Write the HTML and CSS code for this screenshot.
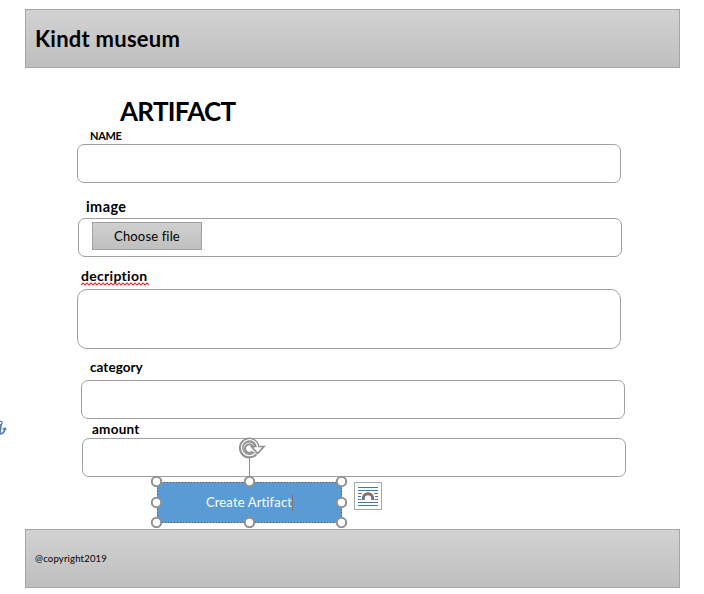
FILE: index.html
```html
<!DOCTYPE html>
<html lang="en">
<head>
<meta charset="utf-8">
<title>Kindt museum</title>
<link rel="stylesheet" href="styles.css">
</head>
<body>
<header class="bar"><span class="brand">Kindt museum</span></header>
<main class="form">
  <h1 class="title"><span>ARTIFACT</span></h1>
  <section class="field name"><label>NAME</label><div class="box"></div></section>
  <section class="field image"><label>image</label><div class="box"><button class="choose"><span>Choose file</span></button></div></section>
  <section class="field description"><label>decription<svg class="squiggle" width="68" height="4" viewBox="0 0 68 4"><path d="M0 3 l2-2 2 2 2-2 2 2 2-2 2 2 2-2 2 2 2-2 2 2 2-2 2 2 2-2 2 2 2-2 2 2 2-2 2 2 2-2 2 2 2-2 2 2 2-2 2 2 2-2 2 2 2-2 2 2 2-2 2 2 2-2 2 2 2-2 2 2 2-2 2 2" fill="none" stroke="#e2333a" stroke-width="1.1"/></svg></label><div class="box"></div></section>
  <section class="field category"><label>category</label><div class="box"></div></section>
  <section class="field amount"><label>amount</label><div class="box"></div></section>
  <div class="actions">
    <button class="create"><span>Create Artifact</span><i class="caret"></i></button>
    <svg class="selection" width="204" height="96" viewBox="0 0 204 96">
      <path d="M102.500 25V45" stroke="#919191" fill="none"/>
      <rect x="10.500" y="50.500" width="184" height="40" fill="none" stroke="#b9cfe4"/>
      <rect x="10.500" y="50.500" width="184" height="40" fill="none" stroke="#4c5968" stroke-dasharray="2 1"/>
      <g fill="#fff" stroke="#919191" stroke-width="2">
        <circle cx="9.500" cy="49.500" r="4.700"/><circle cx="102.500" cy="49.500" r="4.700"/><circle cx="194.500" cy="49.500" r="4.700"/>
        <circle cx="9.500" cy="70.500" r="4.700"/><circle cx="194.500" cy="70.500" r="4.700"/>
        <circle cx="9.500" cy="90.500" r="4.700"/><circle cx="102.500" cy="90.500" r="4.700"/><circle cx="194.500" cy="90.500" r="4.700"/>
      </g>
      <path d="M108.300 21.300A8 8 0 1 1 110 14" fill="none" stroke="#919191" stroke-width="4.800"/>
      <path d="M104.500 14.500H117L110.500 21.500Z" fill="#fff" stroke="#919191" stroke-width="1.700"/>
      <path d="M108 21.500A8 8 0 1 1 110.500 15.500" fill="none" stroke="#fff" stroke-width="1.200"/>
      <path d="M106.500 15.500A4.300 4.300 0 1 0 105.500 19.500" fill="none" stroke="#919191" stroke-width="2"/>
    </svg>
    <svg class="layout" width="28" height="28" viewBox="0 0 28 28">
      <rect x=".5" y=".5" width="27" height="27" fill="#fff" stroke="#a6a6a6"/>
      <path d="M4 5.500H24M4 8.500H24M4 11.500H8M20 11.500H24M4 14.500H7M21 14.500H24M4 17.500H7M21 17.500H24M4 20.500H24M4 23.500H24" stroke="#4779a8" fill="none"/>
      <path d="M9.300 18V16.500A4.700 4.700 0 0 1 18.700 16.500V18" stroke="#737373" stroke-width="3" fill="none"/>
    </svg>
  </div>
</main>
<footer class="bar"><span class="copy">@copyright2019</span></footer>
<svg class="anchor" width="8" height="18" viewBox="0 0 8 18"><g fill="none" stroke="#5b80a8"><circle cx="0.500" cy="3" r="1.700" stroke-width="1.300"/><path d="M.8 5L-.5 13.500" stroke-width="2.400"/><path d="M-2 13.500Q4 15 5 8.500" stroke-width="1.800"/><path d="M2.500 9.500L5 8L6.300 10" stroke-width="1.300"/></g></svg>
</body>
</html>
```
FILE: styles.css
```css
* { box-sizing: border-box; }
body {
  margin: 0;
  padding: 9px 24px 6px 25px;
  height: 594px;
  background: #fff;
  color: #000;
  font-family: Lato, "Open Sans", sans-serif;
  font-variant-ligatures: none;
  overflow: hidden;
}
span, label { white-space: nowrap; }
.bar {
  display: flex;
  align-items: center;
  height: 59px;
  padding-left: 9px;
  border: 1px solid #a5a5a5;
  background: linear-gradient(#d2d2d2, #bfbfbf);
}
.brand { font-size: 22px; font-weight: 700; letter-spacing: .25px; }
.copy { font-size: 9.500px; letter-spacing: .2px; }
.form { height: 461px; padding: 28px 0 0 52px; }
.title {
  height: 30px;
  margin: 0 0 2px 43px;
  font-size: 26px;
  line-height: 30px;
  font-weight: 700;
  letter-spacing: -.7px;
}
.field { width: 544px; }
.field label {
  display: block;
  width: max-content;
  height: 16px;
  line-height: 16px;
  font-size: 13.500px;
  font-weight: 700;
}
.box {
  height: 39px;
  border: 1px solid #a0a0a0;
  border-radius: 7px;
}
.name .box { margin-top: 0; }
.name label { margin-left: 13px; font-size: 11px; letter-spacing: -.35px; }
.image { margin: 16px 0 0 1px; }
.image label { margin: 0 0 3px 8px; font-size: 14.500px; letter-spacing: .4px; }
.image .box { padding: 3px 13px; }
.choose {
  display: block;
  width: 110px;
  height: 28px;
  padding: 0;
  border: 1px solid #a0a0a0;
  background: linear-gradient(#d0d0d0, #bfbfbf);
  color: #000;
  font: 13px Lato, sans-serif;
  letter-spacing: .15px;
}
.description { margin-top: 11px; }
.description label { position: relative; margin: 0 0 5px 4px; font-size: 14px; letter-spacing: .3px; }
.squiggle { position: absolute; left: 0; top: 14px; }
.description .box { height: 60px; border-radius: 10px; }
.category { margin: 10px 0 0 4px; }
.category label { margin: 0 0 5px 9px; letter-spacing: .05px; }
.amount { margin: 2px 0 0 5px; }
.amount label { margin: 0 0 1px 10px; letter-spacing: .25px; }
.actions {
  position: relative;
  display: flex;
  gap: 12px;
  margin: 5px 0 0 80px;
}
.create {
  display: flex;
  align-items: center;
  justify-content: center;
  width: 185px;
  height: 41px;
  padding: 0 0 1px;
  border: 0;
  background: #5b9bd5;
  color: #fff;
  font: 13px Lato, sans-serif;
  letter-spacing: .15px;
}
.caret { width: 1px; height: 17px; background: #737373; }
.selection { position: absolute; left: -10px; top: -50px; }
.anchor { position: absolute; left: 0; top: 420px; }
```
